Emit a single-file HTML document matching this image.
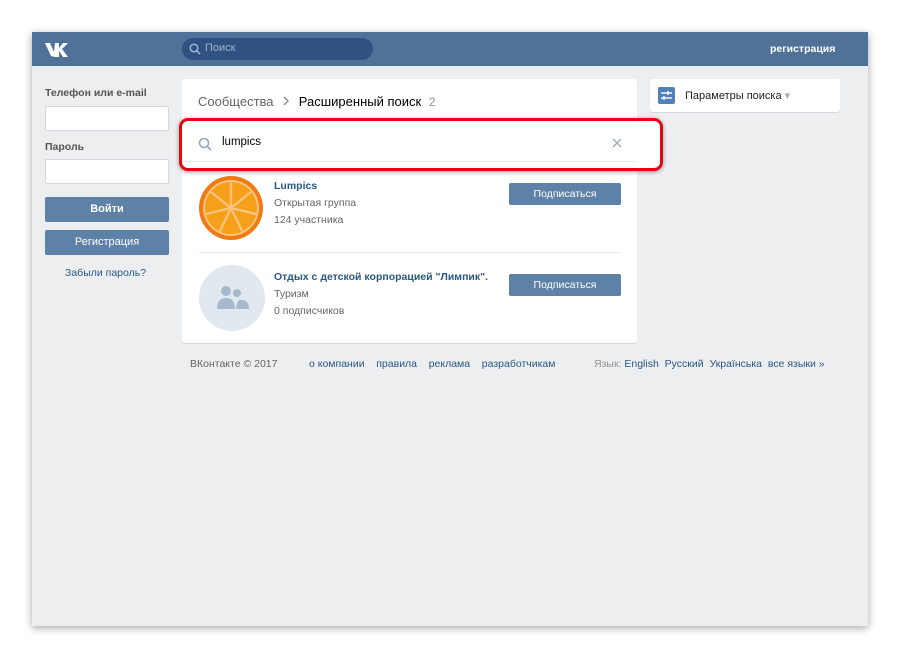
<!DOCTYPE html>
<html><head><meta charset="utf-8"><style>
*{box-sizing:border-box;margin:0;padding:0}
body{width:900px;height:658px;background:#fff;font-family:"Liberation Sans",sans-serif;position:relative;overflow:hidden;font-size:12px;color:#000}
.win{position:absolute;left:32px;top:32px;width:836px;height:594px;background:#edeef0;box-shadow:0 2px 8px rgba(0,0,0,.35)}
.hdr{position:absolute;left:0;top:0;width:836px;height:34px;background:#507299}
.a{position:absolute;white-space:nowrap}
.inp{position:absolute;background:#fff;border:1px solid #d3d9de;border-radius:2px}
.btn{position:absolute;background:#5e81a8;color:#fff;border-radius:2px;text-align:center;font-size:12px}
.card{position:absolute;background:#fff;border-radius:3px;box-shadow:0 1px 0 #d7d8db}
</style></head><body>
<div class="win">
 <div class="hdr">
  <svg class="a" style="left:13px;top:10px" width="28" height="15" viewBox="0 0 28 15"><path d="M0 1h5l4 9 1-9h4v5l4-5h5l-6 6 6 8h-5l-4-6v6h-4L6 14z" fill="#fff"/></svg>
  <div class="a" style="left:150px;top:6px;width:191px;height:22px;border-radius:11px;background:#2f5282"></div>
  <svg class="a" style="left:157px;top:11px" width="12" height="12"><circle cx="5" cy="5" r="3.8" fill="none" stroke="#9fb3cc" stroke-width="1.5"/><line x1="8" y1="8" x2="11" y2="11" stroke="#9fb3cc" stroke-width="1.6"/></svg>
  <div class="a" style="left:173px;top:10px;color:#9fb3cc;font-size:11px">Поиск</div>
  <div class="a" style="left:738px;top:11px;color:#fff;font-weight:bold;font-size:10.5px">регистрация</div>
 </div>
 <div class="a" style="left:13px;top:55px;font-size:10.5px;font-weight:bold;color:#555">Телефон или e-mail</div>
 <div class="inp" style="left:13px;top:74px;width:124px;height:25px"></div>
 <div class="a" style="left:13px;top:109px;font-size:10.5px;font-weight:bold;color:#555">Пароль</div>
 <div class="inp" style="left:13px;top:127px;width:124px;height:25px"></div>
 <div class="btn" style="left:13px;top:165px;width:124px;height:25px;line-height:25px;font-weight:bold;font-size:11px">Войти</div>
 <div class="btn" style="left:13px;top:198px;width:124px;height:25px;line-height:25px;font-size:11px">Регистрация</div>
 <div class="a" style="left:33px;top:235px;color:#2a5885;font-size:10.5px">Забыли пароль?</div>

 <div class="card" style="left:150px;top:47px;width:455px;height:264px">
  <div class="a" style="left:16px;top:15px;font-size:13px;color:#656565">Сообщества <svg width="10" height="10" style="margin:0 4px"><path d="M3 1l4 4-4 4" fill="none" stroke="#888" stroke-width="1.3"/></svg> <span style="color:#000">Расширенный поиск</span> <span style="color:#939393;font-size:12px;margin-left:4px">2</span></div>
  <svg class="a" style="left:17px;top:97px" width="64" height="64"><circle cx="32" cy="32" r="32" fill="#f07a13"/><circle cx="32" cy="32" r="28" fill="#fbc37c"/><circle cx="32" cy="32" r="26" fill="#f6a019"/><g stroke="#fbc37c" stroke-width="2.4"><line x1="32" y1="32" x2="32" y2="6"/><line x1="32" y1="32" x2="52" y2="16"/><line x1="32" y1="32" x2="57" y2="38"/><line x1="32" y1="32" x2="43" y2="55"/><line x1="32" y1="32" x2="21" y2="55"/><line x1="32" y1="32" x2="7" y2="38"/><line x1="32" y1="32" x2="12" y2="16"/></g></svg>
  <div class="a" style="left:92px;top:101px;font-weight:bold;color:#2a5885;font-size:10.5px">Lumpics</div>
  <div class="a" style="left:92px;top:118px;color:#656565;font-size:10.5px">Открытая группа</div>
  <div class="a" style="left:92px;top:135px;color:#656565;font-size:10.5px">124 участника</div>
  <div class="btn" style="left:327px;top:104px;width:112px;height:22px;line-height:22px;font-size:10.5px">Подписаться</div>
  <div class="a" style="left:17px;top:173px;width:422px;height:1px;background:#e7e8ec"></div>
  <div class="a" style="left:17px;top:186px;width:66px;height:66px;border-radius:50%;background:#e1e8f0"></div>
  <svg class="a" style="left:35px;top:206px" width="32" height="24"><circle cx="9" cy="6" r="5" fill="#a7b9cd"/><circle cx="20" cy="8" r="4" fill="#a7b9cd"/><path d="M0 24 Q0 13 9 13 Q18 13 18 24Z" fill="#a7b9cd"/><path d="M19 24 Q20 14 24 15 Q32 15 32 24Z" fill="#a7b9cd"/></svg>
  <div class="a" style="left:92px;top:192px;font-weight:bold;color:#2a5885;font-size:10.5px">Отдых с детской корпорацией "Лимпик".</div>
  <div class="a" style="left:92px;top:209px;color:#656565;font-size:10.5px">Туризм</div>
  <div class="a" style="left:92px;top:226px;color:#656565;font-size:10.5px">0 подписчиков</div>
  <div class="btn" style="left:327px;top:195px;width:112px;height:22px;line-height:22px;font-size:10.5px">Подписаться</div>
 </div>

 <div class="a" style="left:147px;top:86px;width:484px;height:53px;border:3px solid #e30613;border-radius:9px;box-shadow:0 1px 4px rgba(0,0,0,.4);background:#fff"></div>
 <div class="a" style="left:150px;top:129px;width:455px;height:1px;background:#e7e8ec"></div>
 <svg class="a" style="left:166px;top:105px" width="14" height="14"><circle cx="6" cy="6" r="4.5" fill="none" stroke="#8fa4bc" stroke-width="1.5"/><line x1="9.3" y1="9.3" x2="13" y2="13" stroke="#8fa4bc" stroke-width="1.6"/></svg>
 <div class="a" style="left:190px;top:104px;font-size:11.5px;color:#000">lumpics</div>
 <svg class="a" style="left:580px;top:106px" width="10" height="10"><path d="M1 1l8 8M9 1l-8 8" stroke="#9aabbf" stroke-width="1.4"/></svg>

 <div class="card" style="left:618px;top:47px;width:190px;height:33px">
  <div class="a" style="left:8px;top:8px;width:17px;height:17px;background:#5181b8;border-radius:2px"></div>
  <svg class="a" style="left:10px;top:11px" width="13" height="11"><line x1="1" y1="3" x2="12" y2="3" stroke="#fff" stroke-width="1.4"/><line x1="1" y1="8" x2="12" y2="8" stroke="#fff" stroke-width="1.4"/><line x1="8" y1="1" x2="8" y2="5" stroke="#fff" stroke-width="1.4"/><line x1="4" y1="6" x2="4" y2="10" stroke="#fff" stroke-width="1.4"/></svg>
  <div class="a" style="left:35px;top:10px;font-size:11px;color:#222">Параметры поиска <span style="color:#aab">▾</span></div>
 </div>

 <div class="a" style="left:158px;top:326px;font-size:10.5px;color:#656565">ВКонтакте © 2017</div>
 <div class="a" style="left:277px;top:326px;font-size:10.5px;color:#2a5885">о компании&nbsp;&nbsp;&nbsp; правила&nbsp;&nbsp;&nbsp; реклама&nbsp;&nbsp;&nbsp; разработчикам</div>
 <div class="a" style="left:562px;top:326px;font-size:10.5px;color:#939393">Язык: <span style="color:#2a5885">English&nbsp; Русский&nbsp; Українська&nbsp; все языки »</span></div>
</div>
</body></html>
